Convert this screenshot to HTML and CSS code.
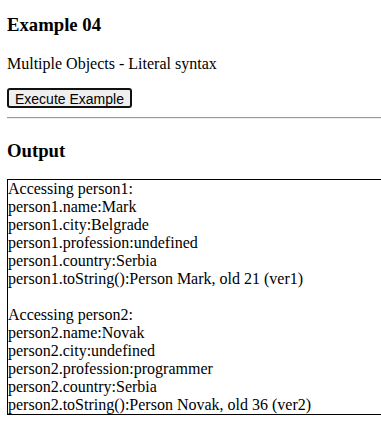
FILE: index.html
```html
<!DOCTYPE html>
<html>
<head>
<meta charset="utf-8">
<title>Example 04</title>
<link rel="stylesheet" href="styles.css">
</head>
<body>
<h3 class="title first">Example 04</h3>
<p class="desc">Multiple Objects - Literal syntax</p>
<button class="run">Execute Example</button>
<hr class="sep">
<h3 class="title second">Output</h3>
<div class="output">Accessing person1:<br>person1.name:Mark<br>person1.city:Belgrade<br>person1.profession:undefined<br>person1.country:Serbia<br>person1.toString():Person Mark, old 21 (ver1)<br><br>Accessing person2:<br>person2.name:Novak<br>person2.city:undefined<br>person2.profession:programmer<br>person2.country:Serbia<br>person2.toString():Person Novak, old 36 (ver2)</div>
</body>
</html>
```
FILE: styles.css
```css
html {
  overflow: hidden;
}
body {
  margin: 14px 0 0 7px;
  width: 390px;
  font-family: "Liberation Serif", "Times New Roman", serif;
  font-size: 16px;
  color: #000;
  background: #fff;
}
.title {
  font-size: 18.72px;
  font-weight: bold;
  margin: 18.72px 0;
}
.title.first {
  margin-top: 0;
}
.title.second {
  margin-top: 21.5px;
  margin-bottom: 16.5px;
}
.desc {
  margin: 18px 0 15px;
}
.run {
  font-family: "Liberation Sans", Arial, sans-serif;
  font-size: 14px;
  padding: 1px 6px;
  height: 20px;
  border: 2px solid #111;
  border-radius: 3px;
  background: #efefef;
  color: #000;
}
.sep {
  margin: 9px 0 0;
  border: none;
  border-top: 1px solid #9a9a9a;
  border-bottom: 1px solid #eee;
}
.output {
  border: 1px solid #000;
  line-height: 18px;
}
```
